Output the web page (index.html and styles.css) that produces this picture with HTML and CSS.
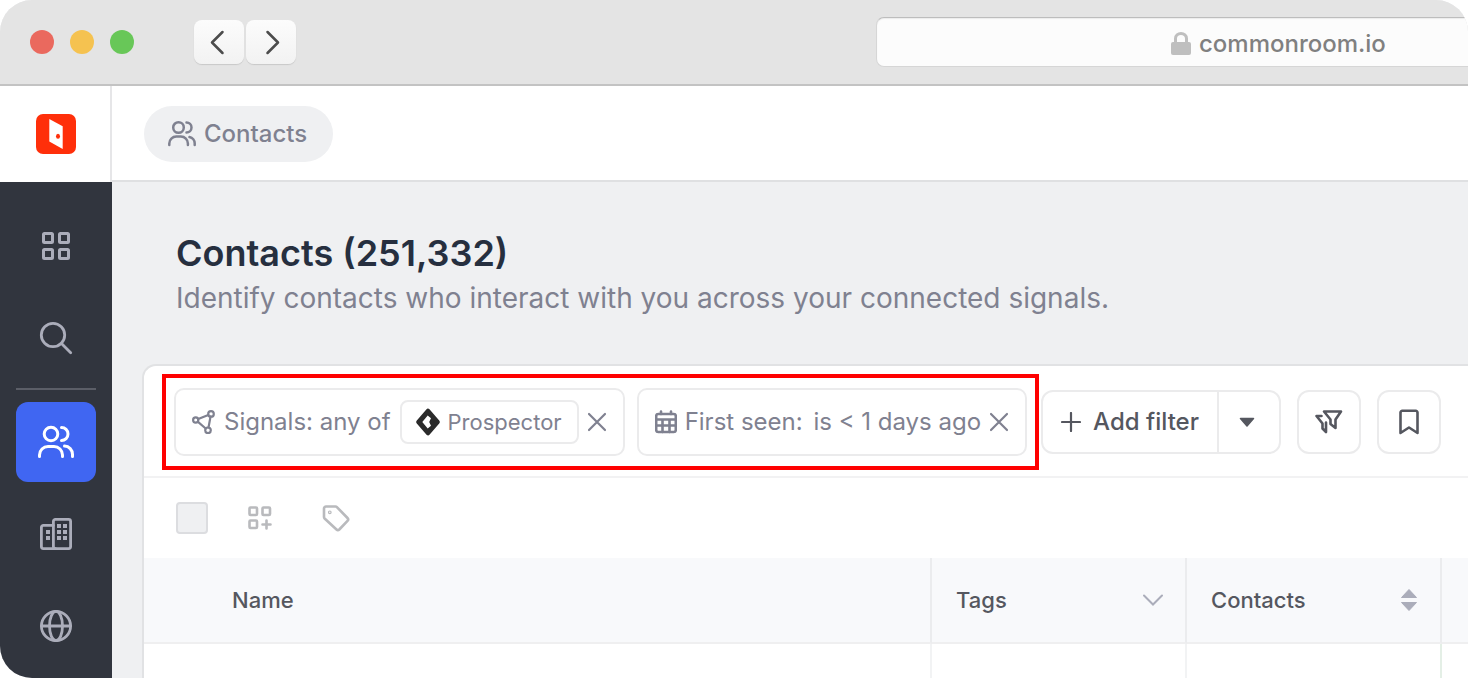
FILE: index.html
```
<!DOCTYPE html>
<html lang="en">
<head>
    <meta charset="UTF-8">
    <meta name="viewport" content="width=device-width, initial-scale=1.0">
    <title>Contacts</title>
    <link rel="stylesheet" href="styles.css">
</head>
<body>
    <div class="window">
        <header class="browser-bar">
            <div class="lights">
                <span class="light red"></span>
                <span class="light yellow"></span>
                <span class="light green"></span>
            </div>
            <div class="history">
                <button class="history-btn" aria-label="Back">
                    <svg width="50" height="44" viewBox="0 0 50 44"><path d="M28.5 12 18 22.500 28.500 33"/></svg>
                </button>
                <button class="history-btn" aria-label="Forward">
                    <svg width="50" height="44" viewBox="0 0 50 44"><path d="M21.500 12 32 22.500 21.500 33"/></svg>
                </button>
            </div>
            <label class="address">
                <svg width="20" height="24" viewBox="0 0 20 24">
                    <rect x="0" y="10" width="20" height="13" rx="2" fill="#bfbfbf"/>
                    <path d="M4.500 11V6.500a5.500 5 0 0 1 11 0V11" fill="none" stroke="#bfbfbf" stroke-width="3"/>
                </svg>
                <input type="text" value="commonroom.io" aria-label="Address">
            </label>
        </header>

        <div class="app">
            <aside class="sidebar">
                <a class="logo" href="#" aria-label="Home">
                    <svg width="40" height="40" viewBox="0 0 40 40">
                        <rect width="40" height="40" rx="7" fill="#ff2f0a"/>
                        <path d="M13.300 5 26.700 12.300V35L13.300 27.500z" fill="#fff"/>
                        <ellipse cx="22" cy="22.300" rx="2" ry="2.500" fill="#ff2f0a"/>
                    </svg>
                </a>
                <nav class="nav">
                    <div class="nav-group">
                        <a class="nav-item" href="#" aria-label="Dashboard">
                            <svg width="40" height="40" viewBox="0 0 40 40" stroke-width="3">
                                <rect x="7.500" y="7.500" width="9" height="9" rx="1"/>
                                <rect x="23.500" y="7.500" width="9" height="9" rx="1"/>
                                <rect x="7.500" y="23.500" width="9" height="9" rx="1"/>
                                <rect x="23.500" y="23.500" width="9" height="9" rx="1"/>
                            </svg>
                        </a>
                        <a class="nav-item" href="#" aria-label="Search">
                            <svg width="40" height="40" viewBox="0 0 40 40" stroke-width="2.800">
                                <circle cx="17" cy="17" r="11.700"/>
                                <path d="M25.500 25.500 34.700 34.700"/>
                            </svg>
                        </a>
                    </div>
                    <div class="nav-group">
                        <a class="nav-item active" href="#" aria-label="Contacts">
                            <svg width="40" height="40" viewBox="0 0 40 40" stroke-width="3">
                                <circle cx="15" cy="12" r="6.800"/>
                                <path d="M3.500 34.500v-1.500a8.500 8.500 0 0 1 8.500-8.500h6a8.500 8.500 0 0 1 8.500 8.500v1.500M25.500 5.500a6.500 6.500 0 0 1 0 13M28.500 24a8.300 8.300 0 0 1 8 8.500v2"/>
                            </svg>
                        </a>
                        <a class="nav-item" href="#" aria-label="Organizations">
                            <svg width="40" height="40" viewBox="0 0 40 40" stroke-width="2.800">
                                <rect x="17.400" y="5.400" width="17.200" height="29.200" rx="2"/>
                                <path d="M17.400 11.400H7.400a2 2 0 0 0-2 2v19.200a2 2 0 0 0 2 2h12"/>
                                <path class="panes" d="M10 16h4v4h-4zM10 22h4v4h-4zM21 10h4v4h-4zM27 10h4v4h-4zM21 16h4v4h-4zM27 16h4v4h-4zM21 22h4v4h-4zM27 22h4v4h-4z"/>
                            </svg>
                        </a>
                        <a class="nav-item" href="#" aria-label="Activity">
                            <svg width="40" height="40" viewBox="0 0 40 40" stroke-width="2.800">
                                <circle cx="20" cy="20" r="14.600"/>
                                <ellipse cx="20" cy="20" rx="6.500" ry="14.600"/>
                                <path d="M5.500 20h29"/>
                            </svg>
                        </a>
                    </div>
                </nav>
            </aside>

            <main class="main">
                <div class="topbar">
                    <a class="crumb" href="#">
                        <svg width="28" height="28" viewBox="0 0 28 28">
                            <circle cx="10.500" cy="7.500" r="5.300"/>
                            <path d="M1.300 25v-1.500a7 7 0 0 1 7-7h4.600a7 7 0 0 1 7 7V25M18.500 2.500a5 5 0 0 1 0 10M21.500 17a6.500 6.500 0 0 1 5.200 6.500V25"/>
                        </svg>
                        <span class="label">Contacts</span>
                    </a>
                </div>

                <div class="page-head">
                    <h1>Contacts (251,332)</h1>
                    <p>Identify contacts who interact with you across your connected signals.</p>
                </div>

                <section class="card">
                    <div class="filters">
                        <div class="highlight">
                            <div class="chip">
                                <svg width="24" height="24" viewBox="0 0 24 24" class="icon">
                                    <circle cx="3.700" cy="10" r="2.600"/>
                                    <circle cx="19" cy="3.900" r="2.800"/>
                                    <circle cx="16" cy="20.300" r="2.800"/>
                                    <path d="M6.200 9 16.300 5M5.700 11.700 13.700 18.500M18.500 6.700 16.500 17.500"/>
                                </svg>
                                <span class="label">Signals: any of</span>
                                <span class="tag">
                                    <svg width="24" height="28" viewBox="0 0 24 28">
                                        <path d="M12 3 21.500 14 12 25 2.500 14z" fill="#2b2b2b" stroke="#2b2b2b" stroke-width="4.500" stroke-linejoin="round"/>
                                        <path d="M11.700 7.500 6.300 14l5.400 6.500 3.300-2.700-1.800-3.800 1.800-3.800z" fill="#fff"/>
                                    </svg>
                                    Prospector
                                </span>
                                <button class="remove" aria-label="Remove signals filter">
                                    <svg width="20" height="20" viewBox="0 0 20 20" class="icon"><path d="M2 2 18 18M18 2 2 18"/></svg>
                                </button>
                            </div>
                            <div class="chip">
                                <svg width="22" height="24" viewBox="1 0 22 24" class="icon heavy">
                                    <rect x="2.200" y="4" width="19.600" height="18" rx="2"/>
                                    <path d="M7 1.500v2.500M17 1.500v2.500M2 9.500h20M2 15.500h20M8.500 9.500V22M15.500 9.500V22"/>
                                </svg>
                                <span class="label">First seen: <span class="value">is &lt; 1 days ago</span></span>
                                <button class="remove" aria-label="Remove first seen filter">
                                    <svg width="20" height="20" viewBox="0 0 20 20" class="icon"><path d="M2 2 18 18M18 2 2 18"/></svg>
                                </button>
                            </div>
                        </div>

                        <div class="actions">
                            <div class="split">
                                <button class="add">
                                    <svg width="20" height="20" viewBox="0 0 20 20" class="icon"><path d="M10 1v18M1 10h18"/></svg>
                                    <span class="label">Add filter</span>
                                </button>
                                <button class="more" aria-label="More filters">
                                    <svg width="16" height="10" viewBox="0 0 16 10"><path d="M1.500 1.500h13L8 9z" fill="#55575f" stroke="#55575f" stroke-width="1.500" stroke-linejoin="round"/></svg>
                                </button>
                            </div>
                            <button class="square" aria-label="Saved filters">
                                <svg width="28" height="28" viewBox="0 0 28 28" class="icon heavy">
                                    <path d="M9 3.500H26L20.500 11.500V20L15.500 16V11.500z"/>
                                    <path d="M6.500 8H1.500L7.500 15.500V20.500L11 24V14.500"/>
                                </svg>
                            </button>
                            <button class="square" aria-label="Bookmark">
                                <svg width="20" height="26" viewBox="0 0 20 26" class="icon heavy"><path d="M1.500 24V3.500a1.700 1.700 0 0 1 1.700-1.700h13.600A1.700 1.700 0 0 1 18.500 3.500v20.500L10 18.500z"/></svg>
                            </button>
                        </div>
                    </div>

                    <div class="toolbar">
                        <input class="check" type="checkbox" aria-label="Select all">
                        <button class="tool" aria-label="Add to segment">
                            <svg width="24" height="24" viewBox="0 0 24 24" class="icon heavy">
                                <rect x="1.500" y="1.500" width="7.500" height="7.500" rx="1"/>
                                <rect x="14.500" y="1.500" width="7.500" height="7.500" rx="1"/>
                                <rect x="1.500" y="14.500" width="7.500" height="7.500" rx="1"/>
                                <path d="M18.500 14.500v8M14.500 18.500h8"/>
                            </svg>
                        </button>
                        <button class="tool" aria-label="Add tag">
                            <svg width="28" height="28" viewBox="0 0 28 28" class="icon heavy">
                                <path d="M2 4.500a2 2 0 0 1 2-2h9.500a2 2 0 0 1 1.400.600L25.500 14a2 2 0 0 1 0 2.800L17.300 25.500a2 2 0 0 1-2.800 0L2.600 14.500a2 2 0 0 1-.600-1.400z"/>
                                <circle cx="7.800" cy="8.300" r=".6"/>
                            </svg>
                        </button>
                    </div>

                    <table class="contacts">
                        <colgroup>
                            <col class="col-name">
                            <col class="col-data">
                            <col class="col-data">
                            <col>
                        </colgroup>
                        <thead>
                            <tr>
                                <th class="name">Name</th>
                                <th>
                                    <div class="head-cell">Tags
                                        <svg width="20" height="12" viewBox="0 0 20 12"><path d="M1 1.500 10 10.500 19 1.500" fill="none" stroke="#abadba" stroke-width="2" stroke-linecap="round"/></svg>
                                    </div>
                                </th>
                                <th>
                                    <div class="head-cell">Contacts
                                        <svg width="18" height="24" viewBox="0 0 18 24" fill="#abadba" stroke="#abadba" stroke-linejoin="round"><path d="M1.500 9.500 9 1.500l7.500 8zM1.500 14.500 9 22.500l7.500-8z"/></svg>
                                    </div>
                                </th>
                                <th></th>
                            </tr>
                        </thead>
                        <tbody>
                            <tr><td></td><td></td><td></td><td></td></tr>
                        </tbody>
                    </table>
                </section>
            </main>
        </div>
    </div>
</body>
</html>
```
FILE: styles.css
```
* {
    box-sizing: border-box;
}
body {
    margin: 0;
    font-family: Inter, "Liberation Sans", sans-serif;
    font-size: 24px;
    color: #7f8190;
    background-color: white;
}
button, input {
    font: inherit;
    color: inherit;
    margin: 0;
    padding: 0;
    border: none;
    background: none;
}
button {
    cursor: pointer;
}
a {
    color: inherit;
    text-decoration: none;
}
svg {
    display: block;
    flex-shrink: 0;
}
.icon {
    fill: none;
    stroke: currentColor;
    stroke-width: 2.2;
    stroke-linecap: round;
    stroke-linejoin: round;
}
.heavy {
    stroke-width: 2.6;
}
.label {
    padding-bottom: 2px;
}
.window {
    display: flex;
    flex-direction: column;
    min-height: 100vh;
    overflow: hidden;
    border-radius: 32px 32px 0 32px;
    background-color: #eff0f2;
}

/* browser chrome */
.browser-bar {
    display: flex;
    align-items: center;
    height: 86px;
    padding-left: 30px;
    background-color: #e4e4e4;
    border-bottom: 2px solid #c3c3c3;
}
.lights {
    display: flex;
    gap: 16px;
}
.light {
    width: 24px;
    height: 24px;
    border-radius: 50%;
}
.red {
    background-color: #ea695e;
}
.yellow {
    background-color: #f5c250;
}
.green {
    background-color: #68c758;
}
.history {
    display: flex;
    gap: 2px;
    margin-left: 60px;
}
.history-btn {
    width: 50px;
    height: 44px;
    border-radius: 8px;
    background: linear-gradient(#fcfcfc, #f2f2f2);
    box-shadow: 0 1px 1px #c8c8c8;
}
.history-btn path {
    fill: none;
    stroke: #4c4c4c;
    stroke-width: 2.5;
    stroke-linecap: round;
    stroke-linejoin: round;
}
.address {
    display: flex;
    flex: 1;
    align-items: center;
    gap: 8px;
    height: 50px;
    margin-left: 580px;
    padding: 3px 0 0 294px;
    color: #808080;
    font-weight: 500;
    background-color: #fcfcfc;
    border: 1px solid #d6d6d6;
    border-top-color: #bdbdbd;
    border-right: none;
    border-radius: 8px 0 0 8px;
    box-shadow: inset 0 1px 1px #ececec;
}
.address input {
    flex: 1;
    min-width: 0;
    outline: none;
}

/* sidebar */
.app {
    display: flex;
    flex: 1;
}
.sidebar {
    flex: 0 0 112px;
    background-color: #31353e;
}
.logo {
    display: flex;
    align-items: center;
    height: 96px;
    padding-left: 36px;
    background-color: white;
    border-right: 2px solid #e6e6e8;
}
.nav {
    padding: 24px 16px 12px;
}
.nav-group {
    display: flex;
    flex-direction: column;
    gap: 12px;
}
.nav-group + .nav-group {
    margin-top: 10px;
    padding-top: 12px;
    border-top: 2px solid #5b5e67;
}
.nav-item {
    display: flex;
    align-items: center;
    justify-content: center;
    height: 80px;
    border-radius: 12px;
    color: #abadba;
}
.nav-item svg {
    fill: none;
    stroke: currentColor;
    stroke-linecap: round;
}
.nav-item .panes {
    fill: currentColor;
    stroke: none;
}
.active {
    color: white;
    background-color: #4066f2;
}

/* main column */
.main {
    display: flex;
    flex: 1;
    flex-direction: column;
    min-width: 0;
}
.topbar {
    display: flex;
    align-items: center;
    height: 96px;
    padding: 2px 0 0 32px;
    background-color: white;
    border-bottom: 2px solid #dfe0e2;
}
.crumb {
    display: flex;
    align-items: center;
    gap: 8px;
    height: 56px;
    padding: 0 26px 0 24px;
    border-radius: 28px;
    font-weight: 500;
    background-color: #eff0f2;
}
.crumb svg {
    fill: none;
    stroke: currentColor;
    stroke-width: 2.5;
    stroke-linecap: round;
}
.page-head {
    padding: 48px 64px 44px;
}
h1 {
    margin: 0;
    font-size: 36px;
    font-weight: 600;
    line-height: 46px;
    color: #262f3f;
}
.page-head p {
    margin: 0;
    font-size: 28px;
    line-height: 44px;
}

/* contacts card */
.card {
    flex: 1;
    margin-left: 30px;
    overflow: hidden;
    background-color: white;
    border: 2px solid #e1e2e4;
    border-width: 2px 0 0 2px;
    border-radius: 14px 0 0 0;
}
.filters {
    display: flex;
    align-items: center;
    gap: 2px;
    padding: 8px 18px 6px;
    border-bottom: 2px solid #f2f2f3;
}
.highlight {
    display: flex;
    gap: 12px;
    padding: 10px 8px;
    border: 4px solid #ff0000;
}
.chip {
    display: flex;
    align-items: center;
    gap: 8px;
    height: 68px;
    padding: 0 16px;
    white-space: nowrap;
    border: 2px solid #ebebec;
    border-radius: 10px;
}
.value {
    margin-left: 4px;
}
.tag {
    display: flex;
    align-items: center;
    gap: 8px;
    height: 44px;
    margin-left: 1px;
    padding: 0 15px 0 14px;
    font-size: 22px;
    border: 2px solid #ebebec;
    border-radius: 8px;
}
.actions {
    display: flex;
    gap: 16px;
    color: #55575f;
}
.split {
    display: flex;
    height: 64px;
    border: 2px solid #ebebec;
    border-radius: 12px;
}
.add {
    display: flex;
    align-items: center;
    gap: 12px;
    padding: 0 18px;
    font-weight: 500;
    white-space: nowrap;
}
.more {
    display: flex;
    align-items: center;
    padding: 0 24px 0 20px;
    border-left: 2px solid #ebebec;
}
.square {
    display: flex;
    align-items: center;
    justify-content: center;
    width: 64px;
    height: 64px;
    border: 2px solid #ebebec;
    border-radius: 12px;
}
.toolbar {
    display: flex;
    align-items: center;
    height: 80px;
    padding-left: 32px;
    color: #b9babd;
}
.check {
    appearance: none;
    width: 32px;
    height: 32px;
    border: 2px solid #dcdde0;
    border-radius: 4px;
    background-color: #eff0f2;
}
.tool {
    margin-left: 40px;
}
.tool + .tool {
    margin-left: 50px;
}
.contacts {
    width: 100%;
    table-layout: fixed;
    border-collapse: separate;
    border-spacing: 0;
}
.col-name {
    width: 788px;
}
.col-data {
    width: 255px;
}
.contacts th, .contacts td {
    padding: 0 22px 0 24px;
    border-right: 2px solid #f2f3f4;
}
.contacts th:last-child, .contacts td:last-child {
    padding: 0;
    border-right: none;
}
.contacts th {
    height: 86px;
    font-size: 22px;
    font-weight: 500;
    text-align: left;
    color: #55575f;
    background-color: #f8f9fb;
    border-right-color: #ebecee;
    border-bottom: 2px solid #efeff0;
}
.contacts .name {
    padding-left: 88px;
}
.contacts td {
    height: 34px;
}
.contacts td:nth-child(3) {
    border-right-color: #e4efe6;
}
.head-cell {
    display: flex;
    align-items: center;
    justify-content: space-between;
}
```
